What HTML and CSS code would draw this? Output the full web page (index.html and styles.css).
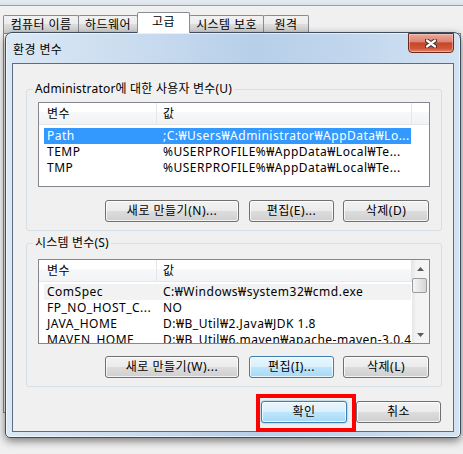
FILE: index.html
```html
<!DOCTYPE html>
<html lang="ko">
<head>
<meta charset="utf-8">
<title>환경 변수</title>
<link rel="stylesheet" href="styles.css">
</head>
<body>
<div class="parent">
  <div class="topstrip"></div>
  <div class="tabs">
    <div class="tab t1">컴퓨터 이름</div>
    <div class="tab t2">하드웨어</div>
    <div class="tab t3 active">고급</div>
    <div class="tab t4">시스템 보호</div>
    <div class="tab t5">원격</div>
  </div>
  <div class="tabpane"></div>
</div>

<div class="dialog">
  <div class="titlebar">
    <span class="title">환경 변수</span>
    <button class="close" aria-label="닫기">
      <svg width="12" height="9" viewBox="0 0 12 9"><path d="M2 1.5 L10 7.5 M10 1.5 L2 7.5" stroke="#3f2a26" stroke-width="4.2" stroke-linecap="round"/><path d="M2 1.5 L10 7.5 M10 1.5 L2 7.5" stroke="#ffffff" stroke-width="2.2" stroke-linecap="round"/></svg>
    </button>
  </div>
  <div class="client">
    <fieldset class="group g1">
      <legend>Administrator에 대한 사용자 변수(U)</legend>
      <div class="list l1">
        <div class="listmain">
          <div class="hdr"><span class="c1">변수</span><span class="c2">값</span><span class="c3"></span></div>
          <div class="rows">
            <div class="row sel"><span class="c1">Path</span><span class="c2">;C:₩Users₩Administrator₩AppData₩Lo...</span></div>
            <div class="row"><span class="c1">TEMP</span><span class="c2">%USERPROFILE%₩AppData₩Local₩Te...</span></div>
            <div class="row"><span class="c1">TMP</span><span class="c2">%USERPROFILE%₩AppData₩Local₩Te...</span></div>
          </div>
        </div>
      </div>
      <div class="btnrow">
        <button class="btn w-new">새로 만들기(N)...</button>
        <button class="btn w-edit">편집(E)...</button>
        <button class="btn w-del">삭제(D)</button>
      </div>
    </fieldset>

    <fieldset class="group g2">
      <legend>시스템 변수(S)</legend>
      <div class="list l2">
        <div class="listmain">
          <div class="hdr"><span class="c1">변수</span><span class="c2">값</span></div>
          <div class="rows">
            <div class="row hot"><span class="c1">ComSpec</span><span class="c2">C:₩Windows₩system32₩cmd.exe</span></div>
            <div class="row"><span class="c1">FP_NO_HOST_C...</span><span class="c2">NO</span></div>
            <div class="row"><span class="c1">JAVA_HOME</span><span class="c2">D:₩B_Util₩2.Java₩JDK 1.8</span></div>
            <div class="row"><span class="c1">MAVEN_HOME</span><span class="c2">D:₩B_Util₩6.maven₩apache-maven-3.0.4</span></div>
          </div>
        </div>
        <div class="vscroll">
          <div class="sb-btn"><svg width="7" height="4" viewBox="0 0 7 4"><path d="M0 4 L3.5 0 L7 4 Z" fill="#5a5a5a"/></svg></div>
          <div class="sb-thumb"></div>
          <div class="sb-track"></div>
          <div class="sb-btn"><svg width="7" height="4" viewBox="0 0 7 4"><path d="M0 0 L7 0 L3.5 4 Z" fill="#5a5a5a"/></svg></div>
        </div>
      </div>
      <div class="btnrow">
        <button class="btn w-new">새로 만들기(W)...</button>
        <button class="btn w-edit hover">편집(I)...</button>
        <button class="btn w-del">삭제(L)</button>
      </div>
    </fieldset>

    <div class="actions">
      <div class="mark">
        <button class="btn w-ok default">확인</button>
      </div>
      <button class="btn w-cancel">취소</button>
    </div>
  </div>
</div>
</body>
</html>
```

FILE: styles.css
```css
* { box-sizing: border-box; }
html, body { margin: 0; padding: 0; }
body {
  width: 463px;
  height: 454px;
  overflow: hidden;
  position: relative;
  background: #f0f0f0;
  font-family: "Noto Sans", "Noto Sans CJK KR", sans-serif;
  font-size: 12px;
  letter-spacing: 0.4px;
  color: #000;
}

/* parent window (System Properties) */
.topstrip {
  height: 6px;
  background: linear-gradient(#e6ebf0, #dbe2ea);
  border-bottom: 1px solid #97a1ac;
}
.tabs {
  display: flex;
  align-items: flex-end;
  height: 20px;
  margin-top: 7px;
  padding-left: 3px;
}
.tab {
  height: 18px;
  margin-left: -1px;
  border: 1px solid #898c95;
  border-bottom: none;
  border-radius: 2px 2px 0 0;
  background: linear-gradient(#f2f2f2 0%, #ebebeb 50%, #dddddd 50%, #cfcfcf 100%);
  display: flex;
  align-items: center;
  justify-content: center;
  line-height: 16px;
  white-space: nowrap;
}
.t1 { width: 76px; margin-left: 0; }
.t2 { width: 60px; }
.t3 { width: 53px; }
.t4 { width: 75px; }
.t5 { width: 46px; }
.tab.active {
  height: 21px;
  background: #fff;
  position: relative;
  z-index: 1;
  padding-bottom: 3px;
}
.tabpane {
  margin-left: 3px;
  width: 458px;
  height: 380px;
  border: 1px solid #898c95;
  background: #fcfcfc;
}

/* dialog window */
.dialog {
  position: absolute;
  left: 5px;
  top: 32px;
  width: 456px;
  height: 406px;
  border: 1px solid #3e4c5c;
  border-radius: 7px 7px 5px 5px;
  background: linear-gradient(to right, #dbe8f5 0%, #c9dbef 30%, #b7cfe9 55%, #c4d8ee 80%, #d4e3f2 100%);
  box-shadow: 0 3px 9px rgba(0, 0, 0, 0.5), inset 0 0 0 1px rgba(255, 255, 255, 0.6);
  display: flex;
  flex-direction: column;
}
.titlebar {
  height: 30px;
  display: flex;
  align-items: flex-start;
  padding: 0 6px 0 7px;
}
.title {
  margin-top: 9px;
  line-height: 16px;
}
.close {
  margin-left: auto;
  width: 46px;
  height: 20px;
  padding: 0;
  border: 1px solid #6b2a20;
  border-radius: 0 0 4px 4px;
  background: linear-gradient(#eaaa9c 0%, #dd8571 42%, #c6452b 50%, #cf5538 80%, #e38a6d 100%);
  box-shadow: inset 0 0 0 1px rgba(255, 220, 210, 0.45);
  display: flex;
  align-items: center;
  justify-content: center;
}
.close svg { display: block; }

.client {
  margin: 0 6px;
  height: 369px;
  border: 1px solid #5d6d7e;
  background: #f0f0f0;
  padding: 0 11px 0 13px;
  display: flex;
  flex-direction: column;
}

/* group boxes */
.group {
  margin: 0;
  padding: 0 11px 8px 11px;
  border: 1px solid #d5dfe5;
  border-radius: 3px;
  min-width: 0;
}
.g1 { margin-top: 17px; }
.g2 { margin-top: 4px; }
.group legend {
  margin-left: -5px;
  padding: 0 2px;
  line-height: 16px;
  letter-spacing: 0.2px;
}

/* list views */
.list {
  height: 85px;
  border: 1px solid #828790;
  background: #fff;
  display: flex;
  overflow: hidden;
}
.l1 { margin-top: 5px; }
.l2 { margin-top: 8px; }
.listmain {
  flex: 1;
  min-width: 0;
  overflow: hidden;
}
.hdr {
  display: flex;
  height: 22px;
  border-bottom: 1px solid #e5e7ea;
  background: linear-gradient(#ffffff 0%, #ffffff 45%, #f7f8f9 45%, #f2f3f5 100%);
}
.hdr span { line-height: 21px; white-space: nowrap; }
.hdr .c1 { width: 118px; padding-left: 8px; border-right: 1px solid #e3e6ea; }
.hdr .c2 { width: 255px; padding-left: 6px; border-right: 1px solid #e3e6ea; }
.hdr .c3 { flex: 1; }
.l1 .rows { padding-top: 3px; }
.l2 .rows { padding-top: 2px; }
.row {
  display: flex;
  width: 367px;
  height: 16px;
  margin-left: 5px;
  line-height: 16px;
  white-space: nowrap;
  letter-spacing: 0.5px;
}
.row .c1 { width: 112px; padding-left: 3px; overflow: hidden; }
.row .c2 { flex: 1; padding-left: 7px; overflow: hidden; }
.row.sel { background: #3399ff; color: #fff; }
.row.hot { background: #f2f2f2; }

/* scrollbar */
.vscroll {
  width: 17px;
  display: flex;
  flex-direction: column;
  background: linear-gradient(to right, #e6e6e6 0%, #f3f3f3 25%, #f5f5f5 100%);
}
.sb-btn {
  height: 17px;
  display: flex;
  align-items: center;
  justify-content: center;
}
.sb-btn svg { display: block; }
.sb-thumb {
  height: 15px;
  margin: 1px 2px 0 0;
  border: 1px solid #9a9a9a;
  border-radius: 2px;
  background: linear-gradient(to right, #f5f5f5 0%, #e6e6e6 50%, #d6d6d6 100%);
}
.sb-track { flex: 1; }

/* buttons */
.btnrow {
  display: flex;
  justify-content: flex-end;
  gap: 9px;
  margin-right: 1px;
}
.g1 .btnrow { margin-top: 13px; }
.g2 .btnrow { margin-top: 12px; }
.btn {
  height: 22px;
  padding: 0;
  font: inherit;
  letter-spacing: 0.5px;
  color: #000;
  line-height: 20px;
  text-align: center;
  white-space: nowrap;
  border: 1px solid #707070;
  border-radius: 3px;
  background: linear-gradient(#f2f2f2 0%, #ebebeb 50%, #dddddd 50%, #cfcfcf 100%);
  box-shadow: inset 0 0 0 1px rgba(255, 255, 255, 0.75);
}
.btn.hover,
.btn.default {
  border-color: #3c7fb1;
  background: linear-gradient(#eaf6fd 0%, #d9f0fc 50%, #bee6fd 50%, #a7d9f5 100%);
}
.btn.default { box-shadow: inset 0 0 0 1px rgba(255, 255, 255, 0.8), 0 0 2px #48a7df; }
.w-new { width: 134px; margin-right: 1px; }
.w-edit { width: 85px; }
.w-del { width: 86px; }
.w-ok { width: 86px; display: block; }
.w-cancel { width: 85px; }

.actions {
  display: flex;
  justify-content: flex-end;
  gap: 9px;
  margin-top: 14px;
  margin-right: 1px;
}
.mark { position: relative; }
.mark::after {
  content: "";
  position: absolute;
  left: -5px;
  top: -7px;
  right: -9px;
  bottom: -9px;
  border: 4px solid #ff0000;
  pointer-events: none;
}
```
